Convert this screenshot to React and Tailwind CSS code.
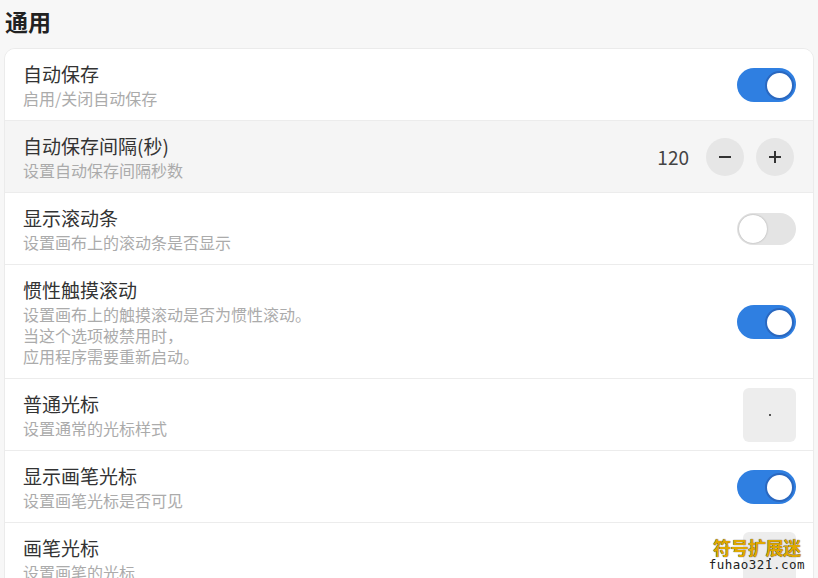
import React from "react";

const font = { fontFamily: '"Noto Sans CJK SC", "Noto Sans", sans-serif' };

function Toggle({ on }) {
  return on ? (
    <div className="w-[59px] h-[34px] rounded-full bg-[#2f7fe1] flex items-center justify-end pr-[2px]">
      <div className="w-[29px] h-[29px] rounded-full bg-white border-[2px] border-[#2a68c0]" />
    </div>
  ) : (
    <div className="w-[59px] h-[32px] rounded-full bg-[#e4e4e4] flex items-center justify-start pl-[2px]">
      <div className="w-[28px] h-[28px] rounded-full bg-white shadow-[0_0_2px_rgba(0,0,0,0.3)]" />
    </div>
  );
}

function Stepper() {
  return (
    <div className="flex items-center mr-[2px]">
      <span className="text-[19px] text-[#444] mr-[17px]">120</span>
      <div className="w-[38px] h-[38px] rounded-full bg-[#e6e6e6] flex items-center justify-center">
        <div className="w-[12px] h-[2px] bg-[#333]" />
      </div>
      <div className="w-[38px] h-[38px] rounded-full bg-[#e6e6e6] flex items-center justify-center ml-[12px] relative">
        <div className="w-[12px] h-[2px] bg-[#333]" />
        <div className="absolute w-[2px] h-[12px] bg-[#333]" />
      </div>
    </div>
  );
}

function CursorBox() {
  return (
    <div className="w-[53px] h-[54px] -my-[4px] rounded-[6px] bg-[#ededed] flex items-center justify-center">
      <div className="w-[2px] h-[2px] bg-[#555]" />
    </div>
  );
}

function Row({ title, sub, right, hover, last }) {
  return (
    <div
      className={`flex items-center justify-between pl-[18px] pr-[17px] pt-[12px] pb-[11px] ${
        last ? "" : "border-b border-[#ececec]"
      } ${hover ? "bg-[#f5f5f5]" : "bg-white"}`}
    >
      <div>
        <div className="text-[19px] leading-[25px] text-[#333]">{title}</div>
        <div className="mt-[2px] text-[16px] leading-[21px] text-[#ababab]">
          {sub.map((s, i) => (
            <div key={i}>{s}</div>
          ))}
        </div>
      </div>
      <div className="flex items-center">{right}</div>
    </div>
  );
}

export default function App() {
  return (
    <div className="w-[818px] h-[578px] overflow-hidden bg-[#f7f7f7] px-[4px] relative" style={font}>
      <div className="pt-[5px] pl-[1px] h-[48px] text-[23px] leading-[32px] font-bold text-[#222]">通用</div>
      <div className="bg-white rounded-[11px] border border-[#ebebeb] overflow-hidden">
        <Row title="自动保存" sub={["启用/关闭自动保存"]} right={<Toggle on />} />
        <Row title="自动保存间隔(秒)" sub={["设置自动保存间隔秒数"]} right={<Stepper />} hover />
        <Row title="显示滚动条" sub={["设置画布上的滚动条是否显示"]} right={<Toggle />} />
        <Row
          title="惯性触摸滚动"
          sub={["设置画布上的触摸滚动是否为惯性滚动。", "当这个选项被禁用时，", "应用程序需要重新启动。"]}
          right={<Toggle on />}
        />
        <Row title="普通光标" sub={["设置通常的光标样式"]} right={<CursorBox />} />
        <Row title="显示画笔光标" sub={["设置画笔光标是否可见"]} right={<Toggle on />} />
        <Row title="画笔光标" sub={["设置画笔的光标"]} right={<CursorBox />} last />
      </div>
      <div className="absolute right-[13px] bottom-[6px] flex flex-col items-center">
        <div className="text-[18px] leading-[22px] font-bold tracking-[-0.5px] text-[#e0a800] [text-shadow:0_0_1px_#000]">符号扩展迷</div>
        <div className="text-[12.5px] leading-[14px] tracking-[0.5px] text-[#222]" style={{ fontFamily: '"DejaVu Sans Mono", monospace' }}>fuhao321.com</div>
      </div>
    </div>
  );
}
